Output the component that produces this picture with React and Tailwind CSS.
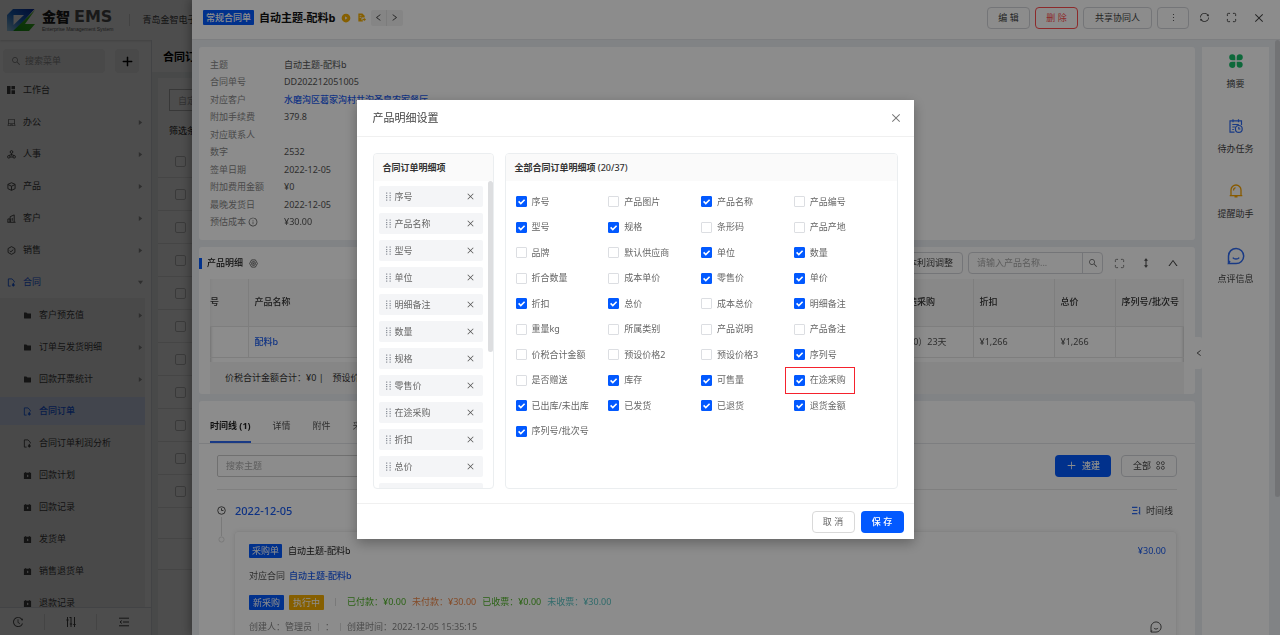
import { useState } from "react";
import {
  AiOutlineClose,
  AiOutlineHistory,
  AiOutlineInfoCircle,
  AiOutlineLaptop,
  AiOutlineLeft,
  AiOutlineMore,
  AiOutlinePlus,
  AiOutlineRight,
  AiOutlineSearch,
  AiOutlineSync,
  AiOutlineUp,
  AiFillFolder,
  AiFillPlayCircle,
} from "react-icons/ai";
import { Maximize } from "lucide-react";

/* ---------- icons ---------- */

const Logo = () => (
  <svg viewBox="0 0 28 22" className="w-7 h-[22px] shrink-0">
    <defs>
      <linearGradient id="logoBlue" x1="0" y1="1" x2="1" y2="0">
        <stop offset="0" stopColor="#a8dcf5" />
        <stop offset="0.5" stopColor="#1a6fd8" />
        <stop offset="1" stopColor="#0a2fb0" />
      </linearGradient>
      <linearGradient id="logoGreen" x1="0" y1="1" x2="1" y2="0">
        <stop offset="0" stopColor="#14a01a" />
        <stop offset="1" stopColor="#4fc81e" />
      </linearGradient>
    </defs>
    <path d="M6 0h21.5L9 20.5 6 22H0V6z M6.5 6v10L17 6z" fill="url(#logoBlue)" fillRule="evenodd" />
    <path d="M28 1L18 15h10l-6 7H6z" fill="url(#logoGreen)" />
  </svg>
);

const DashboardIcon = () => (
  <svg viewBox="0 0 10 10" className="w-2 h-2" fill="currentColor">
    <path d="M0 0h4.4v10H0zM5.6 0H10v4H5.6zM5.6 5.2H10V10H5.6z" />
  </svg>
);

const PeopleIcon = () => (
  <svg viewBox="0 0 10 10" className="w-[9px] h-[9px]" fill="none" stroke="currentColor">
    <circle cx="5" cy="2.2" r="1.5" />
    <circle cx="2" cy="7.6" r="1.4" />
    <circle cx="8" cy="7.6" r="1.4" />
    <path d="M5 3.7v2.6M2 6.2L5 5l3 1.2M3.4 7.8h3.2" />
  </svg>
);

const BoxIcon = () => (
  <svg viewBox="0 0 10 10" className="w-[9px] h-[9px]" fill="none" stroke="currentColor">
    <path d="M5 .8l4 1.8v4.8L5 9.3 1 7.4V2.6zM1 2.8l4 1.9 4-1.9M5 4.7v4.4" />
  </svg>
);

const ClientIcon = () => (
  <svg viewBox="0 0 10 10" className="w-[9px] h-[9px]" fill="none" stroke="currentColor">
    <path d="M1 9V5.5h2.5V9M3.5 9V3l4.5-2v8M.5 9.2h9M5.8 4.5v3" />
  </svg>
);

const SaleIcon = () => (
  <svg viewBox="0 0 10 10" className="w-[9px] h-[9px]" fill="none" stroke="currentColor">
    <path d="M5 .7l3.8 2.1v4.4L5 9.3 1.2 7.2V2.8zM3 5.3l1.3 1.2L7 4" />
  </svg>
);

const ContractIcon = () => (
  <svg viewBox="0 0 10 10" className="w-[9px] h-[9px]" fill="none" stroke="currentColor">
    <path d="M4 9H1.5V1h4L8 3.4V5" />
    <path d="M7 5.5v3.2M5.6 7.3L7 8.8l1.5-1.5" strokeWidth="1.3" />
  </svg>
);

const MoneyIcon = () => (
  <svg viewBox="0 0 10 10" className="w-[9px] h-[9px]" fill="currentColor">
    <path d="M1 2h1.5V1h1v1h3V1h1v1H9v7H1zM4.5 4v3l2-1.5z" fillRule="evenodd" />
  </svg>
);

const GearIcon = () => (
  <svg viewBox="0 0 12 12" className="w-[9px] h-[9px]" fill="none" stroke="currentColor">
    <path d="M3.5 1.2h5L11.2 6l-2.7 4.8h-5L.8 6z" />
    <circle cx="6" cy="6" r="2.6" />
    <circle cx="6" cy="6" r=".8" />
  </svg>
);

const FileArrowIcon = () => (
  <svg viewBox="0 0 10 10" className="w-[9px] h-[9px]">
    <path d="M1.5.5H6L8.5 3v2H5v3h1.5v1.5h-5z" fill="#f5ae00" />
    <path d="M3 3h2M3 5h1.5" stroke="#fff" strokeWidth=".8" />
    <path d="M6 6.5h2V5.2l2 2-2 2V8H6z" fill="#f5ae00" />
  </svg>
);

const DragIcon = () => (
  <svg viewBox="0 0 5 9" className="w-[5px] h-[9px] shrink-0" fill="#8d929b">
    {[0.5, 3, 5, 7.5].map((y) => (
      <g key={y}>
        <rect x="0" y={y} width="1.3" height="1.2" />
        <rect x="3.5" y={y} width="1.3" height="1.2" />
      </g>
    ))}
  </svg>
);

const HeightIcon = () => (
  <svg viewBox="0 0 8 10" className="w-2 h-[10px]" fill="currentColor" stroke="currentColor">
    <path d="M4 2v6" />
    <path d="M4 .5l1.6 2H2.4zM4 9.5l1.6-2H2.4z" strokeWidth=".4" />
  </svg>
);

const CloverIcon = () => (
  <svg viewBox="0 0 14 14" className="w-[14px] h-[14px]" fill="#19be6b">
    <path d="M3.2.3a3.1 3.1 0 0 1 3.1 3.1v2.9H3.2a3 3 0 0 1 0-6zM10.8.3a3 3 0 0 1 0 6H7.7V3.4A3.1 3.1 0 0 1 10.8.3zM3.2 7.7h3.1v2.9a3.1 3.1 0 1 1-3.1-2.9zM7.7 7.7h3.1a3 3 0 1 1-3.1 2.9z" />
  </svg>
);

const TodoIcon = () => (
  <svg viewBox="0 0 14 14" className="w-[14px] h-[14px]" fill="none" stroke="#2f6bf2" strokeWidth="1.2">
    <path d="M5.5 13.2H1V1.8h11.5V6M4 .3v2.9M9.5.3v2.9M3.3 5.5h6.5M3.3 8h2.6M3.3 10.5h1.5" />
    <circle cx="9.8" cy="9.9" r="3.4" />
    <path d="M9.8 8v2h1.6" />
  </svg>
);

const BellIcon = () => (
  <svg viewBox="0 0 14 14" className="w-[14px] h-[14px]" fill="none" stroke="#f7a400" strokeWidth="1.3">
    <path d="M2 11.4V6a5 5 0 0 1 10 0v5.4M.7 11.6h12.6M5.5 12.9h3M4.5 6.5c0-1.5.7-2.5 2-2.9" />
  </svg>
);

const SmileIcon = ({ className }) => (
  <svg viewBox="0 0 18 18" className={className} fill="none" stroke="currentColor" strokeWidth="1.5">
    <path d="M1.5 16.3V9A7.6 7.6 0 1 1 9 16.6H1.5l1.4-2.8" />
    <path d="M5.8 10.6c1.5 2 4.9 2 6.4 0" />
  </svg>
);

const GridIcon = () => (
  <svg viewBox="0 0 10 10" className="w-[9px] h-[9px]" fill="none" stroke="currentColor" strokeWidth=".8">
    <circle cx="2.4" cy="2.4" r="1.7" />
    <circle cx="7.6" cy="2.4" r="1.7" />
    <circle cx="2.4" cy="7.6" r="1.7" />
    <circle cx="7.6" cy="7.6" r="1.7" />
  </svg>
);

const SortIcon = () => (
  <svg viewBox="0 0 10 10" className="w-[9px] h-[9px]" fill="none" stroke="#2f6bf2" strokeWidth="1.2">
    <path d="M0 1.5h6M1 5h5M0 8.5h6M8.5 1v7.5L7.4 7" />
  </svg>
);

const ClockIcon = () => (
  <svg viewBox="0 0 10 10" className="w-[9px] h-[9px]" fill="none" stroke="#444">
    <circle cx="5" cy="5" r="4.2" />
    <path d="M5 2.5V5h2.2" />
  </svg>
);

const SlidersIcon = () => (
  <svg viewBox="0 0 10 10" className="w-[10px] h-[10px]" fill="none" stroke="currentColor">
    <path d="M1.5 0v10M5 0v10M8.5 0v10M.3 3h2.4M3.8 7h2.4M7.3 7.5h2.4M3.5.5H5" />
  </svg>
);

const FoldIcon = () => (
  <svg viewBox="0 0 10 10" className="w-[10px] h-[10px]" fill="none" stroke="currentColor">
    <path d="M0 1.2h10M4 5h6M0 8.8h10M2.8 3.6L1 5l1.8 1.4" />
  </svg>
);

/* ---------- data ---------- */

const mainMenu = [
  { name: "工作台", icon: <DashboardIcon /> },
  { name: "办公", icon: <AiOutlineLaptop size={9} />, arrow: true },
  { name: "人事", icon: <PeopleIcon />, arrow: true },
  { name: "产品", icon: <BoxIcon />, arrow: true },
  { name: "客户", icon: <ClientIcon />, arrow: true },
  { name: "销售", icon: <SaleIcon />, arrow: true },
];

const subMenu = [
  { name: "客户预充值", icon: <AiFillFolder size={9} />, arrow: true },
  { name: "订单与发货明细", icon: <AiFillFolder size={9} />, arrow: true },
  { name: "回款开票统计", icon: <AiFillFolder size={9} />, arrow: true },
  { name: "合同订单", icon: <ContractIcon />, active: true },
  { name: "合同订单利润分析", icon: <ContractIcon /> },
  { name: "回款计划", icon: <MoneyIcon /> },
  { name: "回款记录", icon: <MoneyIcon /> },
  { name: "发货单", icon: <MoneyIcon /> },
  { name: "销售退货单", icon: <MoneyIcon /> },
  { name: "退款记录", icon: <MoneyIcon /> },
];

const details = [
  ["主题", "自动主题-配料b"],
  ["合同单号", "DD202212051005"],
  ["对应客户", "水磨沟区葛家沟村共沟圣皇农家餐厅"],
  ["附加手续费", "379.8"],
  ["对应联系人", ""],
  ["数字", "2532"],
  ["签单日期", "2022-12-05"],
  ["附加费用金额", "¥0"],
  ["最晚发货日", "2022-12-05"],
  ["预估成本", "¥30.00"],
];

const selectedItems = [
  "序号", "产品名称", "型号", "单位", "明细备注", "数量",
  "规格", "零售价", "在途采购", "折扣", "总价", "单价",
];

const allFields = [
  ["序号", true], ["产品图片", false], ["产品名称", true], ["产品编号", false],
  ["型号", true], ["规格", true], ["条形码", false], ["产品产地", false],
  ["品牌", false], ["默认供应商", false], ["单位", true], ["数量", true],
  ["折合数量", false], ["成本单价", false], ["零售价", true], ["单价", true],
  ["折扣", true], ["总价", true], ["成本总价", false], ["明细备注", true],
  ["重量kg", false], ["所属类别", false], ["产品说明", false], ["产品备注", false],
  ["价税合计金额", false], ["预设价格2", false], ["预设价格3", false], ["序列号", true],
  ["是否赠送", false], ["库存", true], ["可售量", true], ["在途采购", true],
  ["已出库/未出库", true], ["已发货", true], ["已退货", true], ["退货金额", true],
  ["序列号/批次号", true],
];

const sideLinks = [
  { name: "摘要", icon: <CloverIcon /> },
  { name: "待办任务", icon: <TodoIcon /> },
  { name: "提醒助手", icon: <BellIcon /> },
  { name: "点评信息", icon: <SmileIcon className="w-[18px] h-[18px] text-[#2f6bf2]" /> },
];

/* ---------- page behind the drawer ---------- */

const Caret = ({ down }) => (
  <svg viewBox="0 0 6 6" className="w-[5px] h-[5px] ml-auto" fill="#999">
    {down ? <path d="M0 1h6L3 5z" /> : <path d="M1 0v6l4-3z" />}
  </svg>
);

const Sidebar = () => (
  <aside className="w-[152px] shrink-0 flex flex-col border-r border-[#dcdfe6] min-h-0">
    <div className="flex items-center gap-[10px] pl-[3px] pt-[9px]">
      <label className="flex items-center gap-1 w-[102px] h-6 rounded bg-[#f2f2f2] pl-2 text-[#888]">
        <AiOutlineSearch size={10} className="shrink-0" />
        <input
          aria-label="搜索菜单"
          placeholder="搜索菜单"
          className="w-full bg-transparent outline-none placeholder:text-[#999]"
        />
      </label>
      <button aria-label="新增" className="w-6 h-6 rounded bg-[#f2f2f2] flex items-center justify-center text-black">
        <AiOutlinePlus size={13} strokeWidth={40} />
      </button>
    </div>
    <nav className="mt-px flex-1 min-h-0 overflow-hidden text-[#444]">
      {mainMenu.map((item) => (
        <a key={item.name} href="#" className="flex items-center h-8 pl-[7px] pr-2">
          <span className="w-4">{item.icon}</span>
          {item.name}
          {item.arrow && <Caret />}
        </a>
      ))}
      <a href="#" className="flex items-center h-8 pl-[7px] pr-2 text-[#1b62f5]">
        <span className="w-4">
          <ContractIcon />
        </span>
        合同
        <Caret down />
      </a>
      <div className="mr-[6px] pt-px bg-[#f5f5f5]">
        {subMenu.map((item) => (
          <div key={item.name} className="h-8 py-[2px]">
            <a
              href="#"
              className={
                item.active
                  ? "flex items-center h-7 pl-[23px] pr-[2px] bg-[#dbe8ff] text-[#1b62f5] font-medium"
                  : "flex items-center h-7 pl-[23px] pr-[2px]"
              }
            >
              <span className="w-4">{item.icon}</span>
              {item.name}
              {item.arrow && <Caret />}
            </a>
          </div>
        ))}
      </div>
    </nav>
    <div className="h-7 shrink-0 flex items-center border-t border-[#dcdfe6] text-[#444]">
      <button aria-label="历史" className="w-[44px] flex justify-center pr-2">
        <AiOutlineHistory size={12} />
      </button>
      <button aria-label="设置" className="w-[54px] h-4 flex items-center justify-center border-x border-[#e4e4e4]">
        <SlidersIcon />
      </button>
      <button aria-label="收起" className="w-[54px] flex justify-center">
        <FoldIcon />
      </button>
    </div>
  </aside>
);

const OrderPage = () => (
  <div className="h-full flex flex-col bg-white">
    <header className="h-10 shrink-0 flex items-center px-[7px] shadow-[0_1px_2px_rgba(0,0,0,0.15)]">
      <Logo />
      <div className="ml-[7px] text-[#222]">
        <div className="flex items-center gap-1 font-bold h-[15px]">
          <span className="text-[14px] leading-[15px] font-black">金智</span>
          <span className="text-[16px] leading-[15px] font-['DejaVu_Sans',sans-serif] text-[#555]">EMS</span>
        </div>
        <div className="mt-[2px] text-[5px] leading-[6px] font-['Liberation_Sans',sans-serif] text-[#666]">
          Enterprise Management System
        </div>
      </div>
      <div className="ml-4 w-px h-3 bg-[#ddd]" />
      <span className="ml-3 whitespace-nowrap">青岛金智电子</span>
    </header>
    <div className="flex-1 min-h-0 flex">
      <Sidebar />
      <main className="flex-1 min-w-0 flex flex-col bg-[#f0f5f5] overflow-hidden">
        <h1 className="h-8 shrink-0 bg-white pl-[11px] text-[11px] leading-[34px] font-bold text-black">合同订单</h1>
        <div className="mt-[6px] ml-[6px] flex-1 bg-white pt-[11px]">
          <div className="pl-[11px]">
            <input
              aria-label="筛选"
              placeholder="自定义筛选"
              className="block w-[120px] h-[22px] border border-[#bbb] px-2 placeholder:text-[#aaa]"
            />
            <div className="h-[34px] pt-[12px] text-[#222]">筛选条件</div>
          </div>
          {[0, 1, 2, 3, 4, 5, 6, 7, 8, 9, 10].map((row) => (
            <div key={row} className="h-[33px] flex items-center pl-[17px] border-b border-[#e8e8e8]">
              <input
                type="checkbox"
                aria-label="选择订单"
                className="appearance-none w-[11px] h-[11px] border border-[#c4c4c4] rounded-[2px]"
              />
            </div>
          ))}
          <div className="h-[31px] border-b border-[#e8e8e8]" />
          <div className="h-[31px] border-b border-[#e8e8e8]" />
        </div>
      </main>
    </div>
  </div>
);

/* ---------- drawer ---------- */

const DrawerHeader = () => (
  <header className="h-10 shrink-0 flex items-center pl-[11px] pr-[15px] pb-1 bg-white border-b border-[#e4e6ea]">
    <span className="h-[15px] px-[3px] bg-[#0259ff] text-white rounded-[1px] leading-[15px] font-medium">常规合同单</span>
    <h2 className="ml-[5px] text-[11px] leading-4 font-bold text-[#111]">自动主题-配料b</h2>
    <AiFillPlayCircle size={10} className="ml-[5px] text-[#f5ae00]" />
    <span className="ml-[6px]">
      <FileArrowIcon />
    </span>
    <div className="ml-[5px] flex h-4 bg-[#f2f2f2] rounded-[2px] text-[#333]">
      <button aria-label="上一条" className="w-4 flex items-center justify-center border-r border-[#e2e2e2]">
        <AiOutlineLeft size={9} />
      </button>
      <button aria-label="下一条" className="w-4 flex items-center justify-center">
        <AiOutlineRight size={9} />
      </button>
    </div>
    <div className="ml-auto flex items-center gap-[5px] text-[#444]">
      <button className="w-[43px] h-[22px] border border-[#d4d6da] rounded">编 辑</button>
      <button className="w-[43px] h-[22px] border border-[#ff4d4f] rounded text-[#ff4d4f]">删 除</button>
      <button className="w-[69px] h-[22px] border border-[#d4d6da] rounded">共享协同人</button>
      <button aria-label="更多" className="w-[32px] h-[22px] border border-[#d4d6da] rounded flex items-center justify-center">
        <AiOutlineMore size={11} />
      </button>
      <div className="flex items-center gap-4 pl-[5px]">
        <button aria-label="刷新">
          <AiOutlineSync size={11} />
        </button>
        <button aria-label="全屏">
          <Maximize size={11} />
        </button>
        <button aria-label="关闭">
          <AiOutlineClose size={12} />
        </button>
      </div>
    </div>
  </header>
);

const DetailCard = () => (
  <section className="h-[193px] shrink-0 bg-white rounded-[3px] px-[11px] py-[10px]">
    <dl className="h-full flex flex-col justify-between">
      {details.map(([label, value]) => (
        <div key={label} className="flex items-center h-4">
          <dt className="w-[74px] flex items-center gap-[2px] text-[#888]">
            {label}
            {label === "预估成本" && <AiOutlineInfoCircle size={10} className="text-[#555]" />}
          </dt>
          <dd className="text-[#555]">
            {label === "对应客户" ? (
              <a href="#" className="text-[#1b5cf0] font-medium">
                {value}
              </a>
            ) : (
              value
            )}
          </dd>
        </div>
      ))}
    </dl>
  </section>
);

const ProductCard = () => (
  <section className="h-[147px] shrink-0 bg-white rounded-[3px] flex flex-col">
    <div className="h-8 shrink-0 flex items-center pr-4">
      <span className="w-[3px] h-[11px] bg-[#0259ff]" />
      <h3 className="ml-[5px] mr-[6px] font-medium text-[#222]">产品明细</h3>
      <GearIcon />
      <button className="ml-auto h-[22px] px-[9px] border border-[#d4d6da] rounded text-[#444]">成本利润调整</button>
      <div className="ml-[5px] flex w-[135px] h-[22px] border border-[#d4d6da] rounded">
        <input
          aria-label="产品名称"
          placeholder="请输入产品名称..."
          className="flex-1 min-w-0 px-2 bg-transparent placeholder:text-[#aaa]"
        />
        <button aria-label="搜索" className="w-5 flex items-center justify-center border-l border-[#d4d6da] text-[#666]">
          <AiOutlineSearch size={10} />
        </button>
      </div>
      <div className="flex items-center gap-4 pl-[11px] text-[#444]">
        <button aria-label="展开" className="text-[#777]">
          <Maximize size={11} />
        </button>
        <button aria-label="行高" className="px-px">
          <HeightIcon />
        </button>
        <button aria-label="收起">
          <AiOutlineUp size={12} />
        </button>
      </div>
    </div>
    <div className="mx-[11px] h-[83px] shrink-0 overflow-hidden shadow-[inset_4px_0_3px_-3px_rgba(0,0,0,0.2),inset_-4px_0_3px_-3px_rgba(0,0,0,0.2)]">
      <table className="w-full table-fixed text-left text-[#555]">
        <thead>
          <tr className="h-[47px] bg-[#f5f5f5]/80 text-[#333] border-b border-[#e6e6e6]">
            <th className="w-[38px] font-medium border-r border-[#e6e6e6]">号</th>
            <th className="font-medium px-[6px]">产品名称</th>
            <th className="w-[80px] font-medium px-[6px] border-r border-[#e6e6e6]">在途采购</th>
            <th className="w-[81px] font-medium px-[6px] border-r border-[#e6e6e6]">折扣</th>
            <th className="w-[61px] font-medium px-[6px] border-r border-[#e6e6e6]">总价</th>
            <th className="w-[69px] font-medium pl-[6px] whitespace-nowrap">序列号/批次号</th>
          </tr>
        </thead>
        <tbody>
          <tr className="h-[31px] border-b border-[#e6e6e6]">
            <td className="border-r border-[#e6e6e6]" />
            <td className="px-[6px]">
              <a href="#" className="text-[#1b5cf0] font-medium">
                配料b
              </a>
            </td>
            <td className="px-[6px] whitespace-nowrap border-r border-[#e6e6e6]">1（0）23天</td>
            <td className="px-[6px] border-r border-[#e6e6e6]">¥1,266</td>
            <td className="px-[6px] border-r border-[#e6e6e6]">¥1,266</td>
            <td />
          </tr>
        </tbody>
      </table>
    </div>
    <div className="mx-[11px] flex-1 flex items-center px-[15px] bg-[#f5f5f5] text-[#333]">
      <span>价税合计金额合计：¥0 |</span>
      <span className="ml-[9px]">预设价格2</span>
    </div>
  </section>
);

const TimelineCard = () => (
  <section className="flex-1 min-h-0 overflow-hidden bg-white rounded-t-[3px]">
    <div className="h-[43px] flex items-end gap-[22px] pl-[11px] border-b border-[#e4e6ea] text-[#555]">
      <button className="h-8 border-b-2 border-[#2f6bf2] font-bold text-[#222]">时间线 (1)</button>
      <button className="h-8 border-b-2 border-transparent">详情</button>
      <button className="h-8 border-b-2 border-transparent">附件</button>
      <button className="h-8 border-b-2 border-transparent">采购</button>
    </div>
    <div className="mx-[18px]">
      <div className="h-[46px] flex items-center pb-[2px] border-b border-[#e8e8e8]">
        <input
          aria-label="搜索主题"
          placeholder="搜索主题"
          className="w-[240px] h-[22px] px-2 border border-[#ccc] rounded-[2px] placeholder:text-[#aaa]"
        />
        <button className="ml-auto w-[56px] h-[22px] flex items-center justify-center gap-[5px] rounded bg-[#0259ff] text-white font-medium">
          <AiOutlinePlus size={11} />
          速建
        </button>
        <button className="ml-[10px] w-[56px] h-[22px] flex items-center justify-center gap-[5px] border border-[#d4d6da] rounded text-[#444]">
          全部
          <GridIcon />
        </button>
      </div>
      <div className="h-[41px] flex items-center">
        <ClockIcon />
        <time className="ml-[9px] text-[11px] font-medium text-[#1b5cf0]">2022-12-05</time>
        <button className="ml-auto mr-1 flex items-center gap-[5px] text-[#444]">
          <SortIcon />
          时间线
        </button>
      </div>
      <div className="flex">
        <svg viewBox="0 0 9 26" className="w-[9px] h-[26px] -mt-[14px] shrink-0" fill="none" stroke="#dcdcdc">
          <path d="M4.5 0v19" />
          <circle cx="4.5" cy="22.5" r="2.6" />
        </svg>
        <article className="ml-2 flex-1 pl-[14px] pr-[10px] pt-[11px] h-[130px] border border-[#f0f0f0] rounded shadow-[0_0_4px_rgba(0,0,0,0.08)] text-[#555]">
          <div className="flex items-center h-4">
            <span className="h-[14px] px-[3px] bg-[#0259ff] text-white rounded-[1px] leading-[14px]">采购单</span>
            <span className="ml-[6px] text-[#222]">自动主题-配料b</span>
            <span className="ml-auto text-[#1b5cf0]">¥30.00</span>
          </div>
          <div className="mt-[9px] h-4 flex items-center gap-[4px]">
            对应合同
            <a href="#" className="text-[#1b5cf0] font-medium">
              自动主题-配料b
            </a>
          </div>
          <div className="mt-[10px] h-4 flex items-center">
            <span className="h-[15px] px-[4px] bg-[#0259ff] text-white rounded-[1px] leading-[15px]">新采购</span>
            <span className="ml-[5px] h-[15px] px-[4px] bg-[#f5ae00] text-white rounded-[1px] leading-[15px]">执行中</span>
            <span className="mx-[11px] w-px h-2 bg-[#ddd]" />
            <div className="flex gap-[6px]">
              <span className="text-[#52b52a]">已付款：¥0.00</span>
              <span className="text-[#f08a4b]">未付款：¥30.00</span>
              <span className="text-[#52b52a]">已收票：¥0.00</span>
              <span className="text-[#5cc4c4]">未收票：¥30.00</span>
            </div>
          </div>
          <div className="mt-[9px] h-4 flex items-center text-[#888]">
            创建人：管理员
            <span className="mx-[6px] w-px h-2 bg-[#ddd]" />：
            <span className="mx-[6px] w-px h-2 bg-[#ddd]" />
            创建时间：2022-12-05 15:35:15
            <SmileIcon className="ml-auto mr-1 w-3 h-3 text-[#555]" />
          </div>
        </article>
      </div>
    </div>
  </section>
);

const Drawer = () => (
  <div className="fixed inset-y-0 right-0 w-[85%] flex flex-col bg-[#ebeef3] shadow-[-3px_0_8px_rgba(0,0,0,0.25)]">
    <DrawerHeader />
    <div className="flex-1 min-h-0 flex">
      <div className="flex-1 min-w-0 flex flex-col gap-[7px] pl-[7px] pt-[7px]">
        <DetailCard />
        <ProductCard />
        <TimelineCard />
      </div>
      <div className="w-[7px] flex flex-col pt-[297px]">
        <button aria-label="展开侧栏" className="h-8 bg-white rounded-r-[2px] flex items-center justify-center text-[#333]">
          <AiOutlineLeft size={8} className="shrink-0" />
        </button>
      </div>
      <div className="pt-[7px] flex">
        <nav className="w-[67px] bg-white pt-[5px] text-[#444]">
          {sideLinks.map((link) => (
            <a key={link.name} href="#" className="h-[65px] flex flex-col items-center">
              <span className="h-[18px] flex items-center">{link.icon}</span>
              <span className="mt-2 leading-3">{link.name}</span>
            </a>
          ))}
        </nav>
      </div>
      <div className="w-[11px] pl-[6px] pb-[138px]">
        <div className="h-full bg-[#cfd2d6] rounded" />
      </div>
    </div>
  </div>
);

/* ---------- settings modal ---------- */

const FieldCheckbox = ({ name, checked, onToggle }) => (
  <label className="relative flex items-center gap-[5px]">
    <span className="relative w-[11px] h-[11px]">
      <input
        type="checkbox"
        checked={checked}
        onChange={onToggle}
        className="peer block appearance-none w-[11px] h-[11px] border border-[#dcdee2] rounded-[1px] checked:bg-[#0259ff] checked:border-[#0259ff]"
      />
      <svg
        viewBox="0 0 11 11"
        className="hidden peer-checked:block absolute inset-0 pointer-events-none"
        fill="none"
        stroke="#fff"
        strokeWidth="1.6"
      >
        <path d="M2.6 5.4l2.2 2.2 3.8-3.9" />
      </svg>
    </span>
    {name}
    {name === "在途采购" && (
      <span className="absolute -left-[9px] -inset-y-px w-[70px] border border-[#f5222d] pointer-events-none" />
    )}
  </label>
);

const SettingsModal = () => {
  const [fields, setFields] = useState(allFields);
  const count = fields.filter((field) => field[1]).length;

  const toggle = (name) => {
    setFields(fields.map((field) => (field[0] === name ? [name, !field[1]] : field)));
  };

  return (
    <div className="fixed inset-0 flex items-start justify-center pt-[100px] pr-[10px] bg-black/45">
      <div role="dialog" aria-label="产品明细设置" className="w-[557px] bg-white shadow-[0_4px_12px_rgba(0,0,0,0.3)] text-[#666]">
        <div className="h-[37px] flex items-center justify-between px-4 border-b border-[#f0f0f0]">
          <h2 className="text-[11px] text-[#444]">产品明细设置</h2>
          <button aria-label="关闭" className="text-[#777] -mr-1">
            <AiOutlineClose size={12} />
          </button>
        </div>
        <div className="flex gap-[11px] p-4 pb-[14px]">
          <section className="w-[121px] h-[336px] flex flex-col border border-[#ebeef0] rounded overflow-hidden">
            <h3 className="h-[27px] shrink-0 pl-[9px] leading-[27px] bg-[#fafafa] font-bold text-[#333]">合同订单明细项</h3>
            <div className="flex-1 min-h-0 flex justify-between">
              <ul className="w-[109px] pl-[5px] pt-[5px] flex flex-col gap-[6px]">
                {selectedItems.map((item) => (
                  <li key={item} className="h-[21px] shrink-0 flex items-center gap-1 pl-[7px] pr-2 bg-[#f4f5f7] rounded-[2px]">
                    <DragIcon />
                    {item}
                    <button aria-label={"移除" + item} className="ml-auto text-[#555]">
                      <AiOutlineClose size={9} />
                    </button>
                  </li>
                ))}
              </ul>
              <div className="w-[5px] h-[171px] bg-[#dddee0] rounded-full" />
            </div>
          </section>
          <section className="flex-1 h-[336px] border border-[#ebeef0] rounded overflow-hidden">
            <h3 className="h-[27px] pl-[9px] leading-[27px] bg-[#fafafa] font-bold text-[#333]">
              全部合同订单明细项 <span className="font-medium">({count}/{fields.length})</span>
            </h3>
            <div className="grid grid-cols-4 grid-rows-10 h-[255px] mt-2 px-[10px]">
              {fields.map(([name, checked]) => (
                <FieldCheckbox key={name} name={name} checked={checked} onToggle={() => toggle(name)} />
              ))}
            </div>
          </section>
        </div>
        <div className="h-9 flex items-center justify-end gap-[6px] pr-[10px] border-t border-[#f0f0f0]">
          <button className="w-[43px] h-[22px] border border-[#d9d9d9] rounded">取 消</button>
          <button className="w-[43px] h-[22px] bg-[#0259ff] rounded text-white font-medium">保 存</button>
        </div>
      </div>
    </div>
  );
};

const App = () => {
  return (
    <div className="h-screen overflow-hidden font-['Noto_Sans','Noto_Sans_CJK_SC',sans-serif] text-[9px] leading-4 text-[#444]">
      <OrderPage />
      <div className="fixed inset-0 bg-black/45" />
      <Drawer />
      <SettingsModal />
    </div>
  );
};

export default App;
